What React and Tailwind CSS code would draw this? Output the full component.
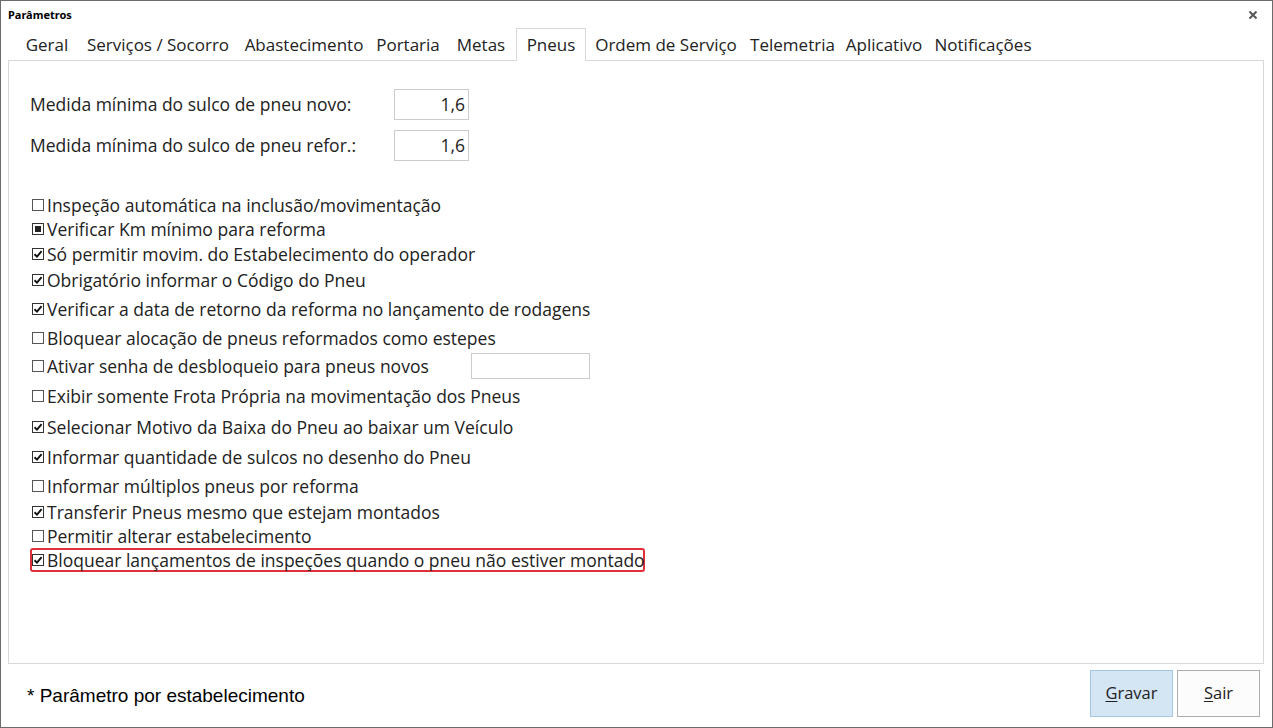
import React from 'react';

const tabs = [
  ['Geral', 'w-[62px]'],
  ['Serviços / Socorro', 'w-[160px]'],
  ['Abastecimento', 'w-[132px]'],
  ['Portaria', 'w-[76px]'],
  ['Metas', 'w-[70px]'],
  ['Pneus', 'w-[70px]'],
  ['Ordem de Serviço', 'w-[160px]'],
  ['Telemetria', 'w-[93px]'],
  ['Aplicativo', 'w-[90px]'],
  ['Notificações', 'w-[108px]'],
];

// label, state (0 = off, 1 = on, 2 = indeterminate), top margin
const options = [
  ['Inspeção automática na inclusão/movimentação', 0, 'mt-0'],
  ['Verificar Km mínimo para reforma', 2, 'mt-0'],
  ['Só permitir movim. do Estabelecimento do operador', 1, 'mt-px'],
  ['Obrigatório informar o Código do Pneu', 1, 'mt-[2px]'],
  ['Verificar a data de retorno da reforma no lançamento de rodagens', 1, 'mt-[5px]'],
  ['Bloquear alocação de pneus reformados como estepes', 0, 'mt-[5px]'],
  ['Ativar senha de desbloqueio para pneus novos', 0, 'mt-[4px]'],
  ['Exibir somente Frota Própria na movimentação dos Pneus', 0, 'mt-[6px]'],
  ['Selecionar Motivo da Baixa do Pneu ao baixar um Veículo', 1, 'mt-[7px]'],
  ['Informar quantidade de sulcos no desenho do Pneu', 1, 'mt-[6px]'],
  ['Informar múltiplos pneus por reforma', 0, 'mt-[5px]'],
  ['Transferir Pneus mesmo que estejam montados', 1, 'mt-[2px]'],
  ['Permitir alterar estabelecimento', 0, 'mt-0'],
];

function Check({ state }) {
  return (
    <span className={`w-[12px] h-[12px] shrink-0 border bg-white flex items-center justify-center ${state ? 'border-[#333]' : 'border-[#555]'}`}>
      {state === 1 && (
        <svg width="10" height="10" viewBox="0 0 10 10">
          <path d="M1.5 5.2 L4 7.6 L8.6 2.2" fill="none" stroke="#111" strokeWidth="1.9" />
        </svg>
      )}
      {state === 2 && <span className="w-[6px] h-[6px] bg-[#222]" />}
    </span>
  );
}

export default function App() {
  return (
    <div className="w-[1273px] h-[728px] border border-[#6b6b6b] bg-white flex flex-col text-[#222] font-['Open_Sans',sans-serif] overflow-hidden">
      <div className="h-[27px] shrink-0 flex items-center justify-between pl-[7px] pr-[14px] pt-px">
        <span className="text-[11px] font-bold text-black font-['Noto_Sans',sans-serif]">Parâmetros</span>
        <svg width="10" height="10" viewBox="0 0 10 10">
          <path d="M1.5 1.5 L8.5 8.5 M8.5 1.5 L1.5 8.5" stroke="#555" strokeWidth="2" />
        </svg>
      </div>

      <div className="h-[32px] shrink-0 flex pl-[15px] relative z-10">
        {tabs.map(([name, w]) =>
          name === 'Pneus' ? (
            <div key={name} className={`${w} h-[33px] border border-b-0 border-[#d9d9d9] bg-white flex items-center justify-center text-[17px]`}>
              {name}
            </div>
          ) : (
            <div key={name} className={`${w} h-[32px] pt-[2px] flex items-center justify-center whitespace-nowrap text-[17px]`}>
              {name}
            </div>
          )
        )}
      </div>

      <div className="ml-[7px] w-[1256px] h-[604px] shrink-0 border border-[#d9d9d9] pl-[21px] pt-[28px]">
        <div className="flex flex-col gap-[10px] text-[17.5px]">
          {['Medida mínima do sulco de pneu novo:', 'Medida mínima do sulco de pneu refor.:'].map((l) => (
            <div key={l} className="flex items-center h-[31px]">
              <span className="w-[364px] whitespace-nowrap">{l}</span>
              <span className="w-[75px] h-[31px] border border-[#ccc] flex items-center justify-end pr-[3px]">1,6</span>
            </div>
          ))}
        </div>

        <div className="mt-[32px] flex flex-col text-[17.5px]">
          {options.map(([label, state, mt]) => (
            <div key={label} className={`${mt} h-[24px] pl-[2px] flex items-center gap-[3px]`}>
              <Check state={state} />
              {label.startsWith('Ativar') ? (
                <>
                  <span className="w-[421px] whitespace-nowrap">{label}</span>
                  <span className="w-[119px] h-[26px] border border-[#ccc]" />
                </>
              ) : (
                <span className="whitespace-nowrap">{label}</span>
              )}
            </div>
          ))}
          <div className="h-[24px] w-[615px] border-2 border-[#e0303a] rounded-[3px] flex items-center gap-[3px]">
            <Check state={1} />
            <span className="whitespace-nowrap">Bloquear lançamentos de inspeções quando o pneu não estiver montado</span>
          </div>
        </div>
      </div>

      <div className="flex-1 flex items-start justify-between pl-[26px] pr-[12px] pt-[6px]">
        <span className="mt-[12px] text-[19px] text-black font-['Liberation_Sans',sans-serif]">* Parâmetro por estabelecimento</span>
        <div className="flex gap-[4px]">
          <button className="w-[83px] h-[47px] bg-[#d4e5f4] border border-[#a3c6e5] text-[16.5px]">
            <span className="underline underline-offset-2">G</span>ravar
          </button>
          <button className="w-[83px] h-[47px] bg-[#fcfcfc] border border-[#adadad] text-[16.5px]">
            <span className="underline underline-offset-2">S</span>air
          </button>
        </div>
      </div>
    </div>
  );
}
